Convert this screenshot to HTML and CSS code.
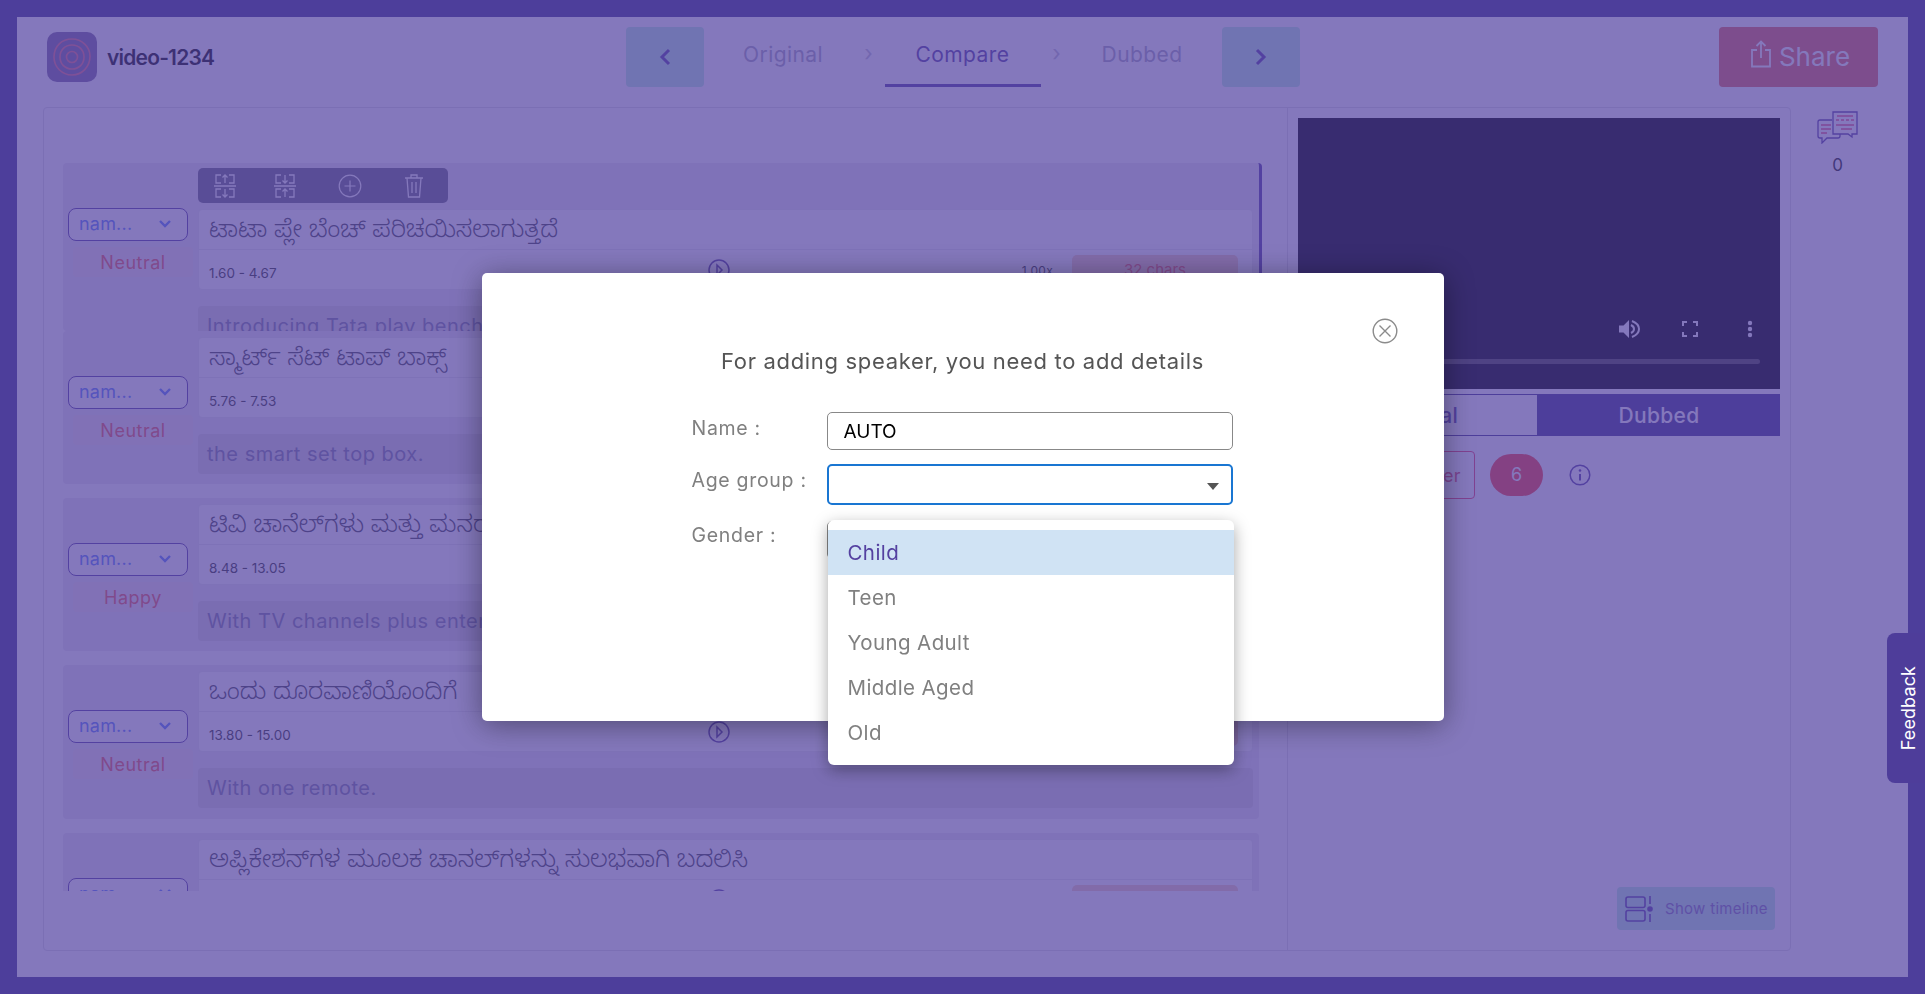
FILE: index.html
```html
<!DOCTYPE html>
<html lang="en">
<head>
  <meta charset="UTF-8" />
  <meta name="viewport" content="width=device-width, initial-scale=1.0" />
  <title>video-1234</title>
  <link rel="stylesheet" href="styles.css">
</head>
<body>

  <div class="page">
    <header class="topbar">
      <div class="brand">
        <div class="logo">
          <svg width="38" height="38" viewBox="0 0 38 38" fill="none" stroke="#ed7b82" stroke-width="1.6">
            <path d="M19 1c10 0 18 8 18 17 0 11-8 19-18 19S1 29 1 19C1 8 9 1 19 1z"/>
            <path d="M19 7c7 0 12 5 12 12s-5 12-12 12S7 26 7 19 12 7 19 7z"/>
            <circle cx="19" cy="19" r="5.500"/>
          </svg>
        </div>
        <span class="video-name">video-1234</span>
      </div>

      <nav class="steps">
        <button class="step-btn">
          <svg width="14" height="18" viewBox="0 0 14 18" fill="none" stroke="#5d49a3" stroke-width="3"><path d="M11 2 4 9l7 7"/></svg>
        </button>
        <a class="step">Original</a>
        <span class="step-sep">›</span>
        <a class="step active">Compare</a>
        <span class="step-sep">›</span>
        <a class="step">Dubbed</a>
        <button class="step-btn">
          <svg width="14" height="18" viewBox="0 0 14 18" fill="none" stroke="#5d49a3" stroke-width="3"><path d="m3 2 7 7-7 7"/></svg>
        </button>
      </nav>

      <div class="topbar-right">
        <button class="share-btn">
          <svg width="22" height="28" viewBox="0 0 22 28" fill="none" stroke="#fff" stroke-width="1.8">
            <path d="M7 10H2v16.500h18V10h-5"/>
            <path d="M11 18V2M6.500 6 11 1.500 15.500 6"/>
          </svg>
          Share
        </button>
      </div>
    </header>

    <main class="workspace">
      <div class="panel">
        <section class="list-pane">
          <div class="list">

            <div class="row row-selected">
              <div class="speaker">
                <div class="speaker-select">nam...<svg width="12" height="8" viewBox="0 0 12 8" fill="none" stroke="#6185ff" stroke-width="2.400"><path d="m1 1 5 5 5-5"/></svg></div>
                <div class="emotion">Neutral</div>
              </div>
              <div class="segment">
                <div class="toolbar">
                  <svg class="tool" width="24" height="26" viewBox="0 0 24 26" fill="none" stroke="#fff" stroke-width="1.300">
                    <path d="M8 2H3v8h5M16 2h5v8h-5M8 16H3v8h5M16 16h5v8h-5"/>
                    <path d="M12 10V2M9.500 4.500 12 2l2.500 2.500M12 16v8M9.500 21.500 12 24l2.500-2.500M1 13h22"/>
                  </svg>
                  <svg class="tool" width="24" height="26" viewBox="0 0 24 26" fill="none" stroke="#fff" stroke-width="1.300">
                    <path d="M8 2H3v8h5M16 2h5v8h-5M8 16H3v8h5M16 16h5v8h-5"/>
                    <path d="M12 2v8M9.500 7.500 12 10l2.500-2.500M12 24v-8M9.500 18.500 12 16l2.500 2.500M1 13h22"/>
                  </svg>
                  <svg class="tool" width="24" height="24" viewBox="0 0 24 24" fill="none" stroke="#fff" stroke-width="1.200">
                    <circle cx="12" cy="12" r="10.800"/>
                    <path d="M12 6.500v11M6.500 12h11"/>
                  </svg>
                  <svg class="tool" width="20" height="26" viewBox="0 0 20 26" fill="none" stroke="#fff" stroke-width="1.300">
                    <path d="M1 5h18M7 5V2h6v3M3 5l1.500 19h11L17 5M8 9v11M12 9v11"/>
                  </svg>
                </div>
                <div class="card">
                  <div class="card-text">ಟಾಟಾ ಪ್ಲೇ ಬೆಂಚ್ ಪರಿಚಯಿಸಲಾಗುತ್ತದೆ</div>
                  <div class="card-meta">
                    <span class="time">1.60 - 4.67</span>
                    <svg class="play" width="22" height="22" viewBox="0 0 22 22" fill="none" stroke="#5d49a3" stroke-width="1.500"><circle cx="11" cy="11" r="10"/><path d="m9 6 5 5-5 5z"/></svg>
                    <span class="speed">1.00x</span>
                    <span class="chars">32 chars</span>
                  </div>
                </div>
                <div class="translation">Introducing Tata play bench</div>
              </div>
            </div>

            <div class="row">
              <div class="speaker">
                <div class="speaker-select">nam...<svg width="12" height="8" viewBox="0 0 12 8" fill="none" stroke="#6185ff" stroke-width="2.400"><path d="m1 1 5 5 5-5"/></svg></div>
                <div class="emotion">Neutral</div>
              </div>
              <div class="segment">
                <div class="card">
                  <div class="card-text">ಸ್ಮಾರ್ಟ್ ಸೆಟ್ ಟಾಪ್ ಬಾಕ್ಸ್</div>
                  <div class="card-meta">
                    <span class="time">5.76 - 7.53</span>
                    <svg class="play" width="22" height="22" viewBox="0 0 22 22" fill="none" stroke="#5d49a3" stroke-width="1.500"><circle cx="11" cy="11" r="10"/><path d="m9 6 5 5-5 5z"/></svg>
                    <span class="speed">1.00x</span>
                    <span class="chars">21 chars</span>
                  </div>
                </div>
                <div class="translation">the smart set top box.</div>
              </div>
            </div>

            <div class="row">
              <div class="speaker">
                <div class="speaker-select">nam...<svg width="12" height="8" viewBox="0 0 12 8" fill="none" stroke="#6185ff" stroke-width="2.400"><path d="m1 1 5 5 5-5"/></svg></div>
                <div class="emotion">Happy</div>
              </div>
              <div class="segment">
                <div class="card">
                  <div class="card-text">ಟಿವಿ ಚಾನೆಲ್‌ಗಳು ಮತ್ತು ಮನರಂಜನೆ</div>
                  <div class="card-meta">
                    <span class="time">8.48 - 13.05</span>
                    <svg class="play" width="22" height="22" viewBox="0 0 22 22" fill="none" stroke="#5d49a3" stroke-width="1.500"><circle cx="11" cy="11" r="10"/><path d="m9 6 5 5-5 5z"/></svg>
                    <span class="speed">1.00x</span>
                    <span class="chars">27 chars</span>
                  </div>
                </div>
                <div class="translation">With TV channels plus entertainment</div>
              </div>
            </div>

            <div class="row">
              <div class="speaker">
                <div class="speaker-select">nam...<svg width="12" height="8" viewBox="0 0 12 8" fill="none" stroke="#6185ff" stroke-width="2.400"><path d="m1 1 5 5 5-5"/></svg></div>
                <div class="emotion">Neutral</div>
              </div>
              <div class="segment">
                <div class="card">
                  <div class="card-text">ಒಂದು ದೂರವಾಣಿಯೊಂದಿಗೆ</div>
                  <div class="card-meta">
                    <span class="time">13.80 - 15.00</span>
                    <svg class="play" width="22" height="22" viewBox="0 0 22 22" fill="none" stroke="#5d49a3" stroke-width="1.500"><circle cx="11" cy="11" r="10"/><path d="m9 6 5 5-5 5z"/></svg>
                    <span class="speed">1.00x</span>
                    <span class="chars">19 chars</span>
                  </div>
                </div>
                <div class="translation">With one remote.</div>
              </div>
            </div>

            <div class="row">
              <div class="speaker">
                <div class="speaker-select">nam...<svg width="12" height="8" viewBox="0 0 12 8" fill="none" stroke="#6185ff" stroke-width="2.400"><path d="m1 1 5 5 5-5"/></svg></div>
                <div class="emotion">Neutral</div>
              </div>
              <div class="segment">
                <div class="card">
                  <div class="card-text">ಅಪ್ಲಿಕೇಶನ್‌ಗಳ ಮೂಲಕ ಚಾನಲ್‌ಗಳನ್ನು ಸುಲಭವಾಗಿ ಬದಲಿಸಿ</div>
                  <div class="card-meta">
                    <span class="time">15.20 - 18.90</span>
                    <svg class="play" width="22" height="22" viewBox="0 0 22 22" fill="none" stroke="#5d49a3" stroke-width="1.500"><circle cx="11" cy="11" r="10"/><path d="m9 6 5 5-5 5z"/></svg>
                    <span class="speed">1.00x</span>
                    <span class="chars">44 chars</span>
                  </div>
                </div>
                <div class="translation">Switch channels easily through apps</div>
              </div>
            </div>

          </div>
        </section>

        <aside class="player-pane">
          <div class="video">
            <div class="video-icons">
              <svg width="22" height="22" viewBox="0 0 22 22" fill="#fff"><path d="M1 7.500h4.500L11 2v18l-5.500-5.500H1z"/><path d="M14 3c5 2 7 5 7 8s-2 6-7 8" fill="none" stroke="#fff" stroke-width="2"/><path d="M13 7c2 1 3 2.500 3 4s-1 3-3 4" fill="none" stroke="#fff" stroke-width="2"/></svg>
              <svg width="16" height="16" viewBox="0 0 16 16" fill="none" stroke="#fff" stroke-width="2"><path d="M1 5V1h4M11 1h4v4M15 11v4h-4M5 15H1v-4"/></svg>
              <svg width="6" height="18" viewBox="0 0 6 18" fill="#fff"><circle cx="3" cy="3" r="2.200"/><circle cx="3" cy="9" r="2.200"/><circle cx="3" cy="15" r="2.200"/></svg>
            </div>
            <div class="video-track"></div>
          </div>
          <div class="audio-tabs">
            <div class="audio-tab">Original</div>
            <div class="audio-tab on">Dubbed</div>
          </div>
          <div class="player-actions">
            <button class="filter-btn">Filter</button>
            <span class="count">6</span>
            <svg width="22" height="22" viewBox="0 0 22 22" fill="none" stroke="#5d49a3" stroke-width="1.500"><circle cx="11" cy="11" r="9.800"/><path d="M11 10v6.500" stroke-width="2"/><circle cx="11" cy="6.500" r="1.300" fill="#5d49a3" stroke="none"/></svg>
          </div>
          <button class="timeline-btn">
            <svg width="28" height="26" viewBox="0 0 28 26" fill="none" stroke="#5d49a3" stroke-width="1.600">
              <rect x="1" y="1" width="19" height="10.500" rx="2"/>
              <rect x="1" y="14.500" width="19" height="10.500" rx="2"/>
              <path d="M25 0v8M25 18v8"/>
              <circle cx="25" cy="13" r="2.800" fill="#5d49a3" stroke="none"/>
            </svg>
            Show timeline
          </button>
        </aside>
      </div>

      <div class="comments">
        <svg width="41" height="33" viewBox="0 0 41 33" fill="none" stroke="#5d49a3" stroke-width="1.300">
          <path d="M15 9H3a2 2 0 0 0-2 2v14a2 2 0 0 0 2 2h2v5l5-5h11a2 2 0 0 0 2-2v-3"/>
          <path d="M16 1h24v22h-5v3l-4-3H16z" fill="#fff"/>
          <path d="M20 5h16M19 9h3M24 9h3M29 9h3M34 9h3M19 14h18M24 18h11M4 14h10M4 18h10M4 22h6" stroke="#ed5a82"/>
        </svg>
        <span class="comments-count">0</span>
      </div>
    </main>
  </div>

  <div class="scrim">
    <div class="modal">
      <svg class="modal-close" width="26" height="26" viewBox="0 0 26 26" fill="none" stroke="#8b8b8b" stroke-width="1.400">
        <circle cx="13" cy="13" r="11.800"/>
        <path d="m7.500 7.500 11 11M18.500 7.500l-11 11"/>
      </svg>
      <h2 class="modal-title">For adding speaker, you need to add details</h2>

      <div class="form">
        <label class="form-label">Name :</label>
        <div class="field">AUTO</div>

        <label class="form-label">Age group :</label>
        <div class="field field-select focused">
          <span class="field-arrow"></span>
          <ul class="dropdown">
            <li class="selected">Child</li>
            <li>Teen</li>
            <li>Young Adult</li>
            <li>Middle Aged</li>
            <li>Old</li>
          </ul>
        </div>

        <label class="form-label">Gender :</label>
        <div class="field field-gender"></div>
      </div>
    </div>
  </div>

  <div class="feedback"><span>Feedback</span></div>

</body>
</html>
```

FILE: styles.css
```css
* {
  box-sizing: border-box;
}

body {
  margin: 0;
  height: 100vh;
  padding: 17px;
  overflow: hidden;
  background: #493c8f;
  font-family: Inter, "Noto Sans", "Noto Sans Kannada", sans-serif;
  color: #2f3239;
}

button {
  font-family: inherit;
  border: 0;
  cursor: pointer;
}

.page {
  display: flex;
  flex-direction: column;
  height: 100%;
  background: #fff;
}

/* top bar */
.topbar {
  display: grid;
  grid-template-columns: 1fr auto 1fr;
  height: 90px;
  padding: 10px 30px 0;
}

.brand {
  display: flex;
  align-items: center;
  gap: 10px;
  height: 50px;
  margin-top: 5px;
}

.logo {
  display: flex;
  align-items: center;
  justify-content: center;
  width: 50px;
  height: 50px;
  background: #7f71a0;
  border-radius: 10px;
}

.video-name {
  font-size: 21px;
  font-weight: 600;
  letter-spacing: -0.8px;
  color: #111;
}

.steps {
  display: flex;
  height: 60px;
}

.step-btn {
  display: flex;
  align-items: center;
  justify-content: center;
  width: 78px;
  background: #bbf0dc;
  border-radius: 4px;
}

.steps .step-btn:first-child {
  margin-right: 10px;
}

.steps .step-btn:last-child {
  margin-left: 10px;
}

.step {
  width: 139px;
  text-align: center;
  line-height: 56px;
  font-size: 21px;
  letter-spacing: 0.4px;
  color: #aaaabe;
}

.step.active {
  width: 156px;
  color: #5d49a3;
  border-bottom: 3px solid #5d49a3;
}

.step-sep {
  width: 32px;
  line-height: 52px;
  text-align: center;
  font-size: 22px;
  color: #c4c4d2;
}

.topbar-right {
  display: flex;
  justify-content: flex-end;
}

.share-btn {
  display: flex;
  align-items: center;
  justify-content: center;
  gap: 7px;
  width: 159px;
  height: 60px;
  padding: 0 0 2px 3px;
  background: #e66e61;
  border-radius: 4px;
  color: #fff;
  font-size: 26px;
  font-weight: 400;
}

.share-btn svg {
  margin-top: -5px;
}

/* main area */
.workspace {
  display: flex;
  flex: 1;
  min-height: 0;
  padding: 0 24px 26px 26px;
}

.panel {
  display: flex;
  flex: 1;
  border: 1px solid #dfdfe3;
  border-radius: 4px;
}

.list-pane {
  width: 1243px;
  padding: 55px 25px 0 19px;
}

.list {
  height: 728px;
  overflow: hidden;
}

.row {
  display: flex;
  height: 153.200px;
  margin: 0 3px 14px 0;
  background: #edeaf0;
  border-radius: 4px;
}

.row-selected {
  height: 168px;
  margin: 0;
  overflow: hidden;
  border-right: 3px solid #5d49a3;
}

.speaker {
  width: 135px;
  padding: 45px 0 0 5px;
}

.speaker-select {
  display: flex;
  align-items: center;
  justify-content: space-between;
  width: 120px;
  height: 33px;
  padding: 0 16px 2px 10px;
  background: #fff;
  border: 1px solid #5d49a3;
  border-radius: 8px;
  font-size: 18px;
  letter-spacing: 0.2px;
  color: #6185ff;
}

.emotion {
  width: 120px;
  height: 30px;
  margin: 6px 0 0 5px;
  background: #f5e8ea;
  border-radius: 4px;
  text-align: center;
  font-size: 18px;
  letter-spacing: 0.5px;
  line-height: 31px;
  color: #f0645c;
}

.segment {
  flex: 1;
  padding: 6px 6px 0 0;
}

.row-selected .segment {
  padding-top: 5px;
}

.toolbar {
  display: flex;
  align-items: center;
  width: 250px;
  height: 35px;
  margin-bottom: 6px;
  background: #717182;
  border-radius: 5px;
}

.tool:nth-child(1) {
  margin-left: 15px;
}

.tool:nth-child(2) {
  margin-left: 36px;
}

.tool:nth-child(3) {
  margin-left: 41px;
}

.tool:nth-child(4) {
  margin-left: 42px;
}

.card {
  height: 81px;
  background: #fff;
  border: 1px solid #e9e9ed;
  border-radius: 4px;
}

.card-text {
  height: 40px;
  padding-left: 10px;
  border-bottom: 1px solid #e9e9ed;
  font-size: 24px;
  font-weight: 300;
  line-height: 38px;
  color: #4a4d55;
  white-space: nowrap;
  overflow: hidden;
}

.card-meta {
  display: flex;
  align-items: flex-start;
  padding: 5px 14px 0 10px;
}

.time {
  width: 499px;
  padding-top: 10px;
  font-size: 13.500px;
  color: #3a3d3a;
}

.play {
  margin-top: 4px;
}

.speed {
  margin-left: auto;
  padding-top: 8px;
  font-size: 12px;
  letter-spacing: 0.3px;
  color: #3a3d3a;
}

.chars {
  width: 166px;
  height: 29px;
  margin-left: 19px;
  background: #f8d4c0;
  border-radius: 5px;
  text-align: center;
  font-size: 15px;
  line-height: 29px;
  color: #f0645c;
}

.translation {
  height: 40px;
  margin-top: 16px;
  padding-left: 9px;
  background: #dcd9dc;
  border-radius: 4px;
  font-size: 20px;
  letter-spacing: 0.5px;
  line-height: 41px;
  color: #8282a3;
  white-space: nowrap;
  overflow: hidden;
}

/* right side */
.player-pane {
  display: flex;
  flex: 1;
  flex-direction: column;
  padding: 10px 10px 20px;
  border-left: 1px solid #dfdfe3;
}

.video {
  position: relative;
  height: 271px;
  background: #000;
}

.video-icons {
  position: absolute;
  right: 27px;
  top: 200px;
  display: flex;
  align-items: center;
  gap: 42px;
}

.video-icons svg:last-child {
  margin-left: 7px;
}

.video-track {
  position: absolute;
  left: 20px;
  right: 20px;
  top: 241px;
  height: 5px;
  border-radius: 3px;
  background: #4d4d43;
}

.audio-tabs {
  display: flex;
  height: 42px;
  margin-top: 5px;
}

.audio-tab {
  width: 240px;
  border: 1px solid #493c8f;
  text-align: center;
  font-size: 21px;
  font-weight: 500;
  letter-spacing: 0.3px;
  line-height: 41px;
  color: #5d49a3;
}

.audio-tab.on {
  width: 242px;
  background: #493c8f;
  color: #fff;
}

.player-actions {
  display: flex;
  align-items: center;
  height: 48px;
  margin-top: 15px;
}

.filter-btn {
  width: 110px;
  height: 48px;
  margin-left: 67px;
  padding-right: 13px;
  background: #fff;
  border: 1px solid #f04b6e;
  border-radius: 4px;
  text-align: right;
  font-size: 18px;
  letter-spacing: 0.4px;
  color: #e0556e;
}

.count {
  width: 53px;
  height: 42px;
  margin: 0 26px 0 15px;
  background: #ff4640;
  border-radius: 21px;
  text-align: center;
  font-size: 18px;
  line-height: 42px;
  color: #fff;
}

.timeline-btn {
  display: flex;
  align-items: center;
  gap: 12px;
  align-self: flex-end;
  width: 158px;
  height: 43px;
  margin: auto 5px 0 0;
  padding: 0 0 0 8px;
  background: #bbf0dc;
  border-radius: 4px;
  white-space: nowrap;
  font-size: 15px;
  letter-spacing: 0.3px;
  color: #827bb4;
}

.comments {
  display: flex;
  flex-direction: column;
  align-items: center;
  width: 94px;
  padding-top: 4px;
}

.comments-count {
  margin-top: 11px;
  font-size: 17px;
  color: #252825;
}

/* modal */
.scrim {
  position: fixed;
  inset: 0;
  display: flex;
  align-items: center;
  justify-content: center;
  background: rgba(80, 62, 159, 0.7);
  backdrop-filter: blur(0.6px);
}

.modal {
  position: relative;
  width: 962px;
  height: 448px;
  padding-top: 73px;
  background: #fff;
  border-radius: 5px;
  box-shadow: 0 4px 30px rgba(0, 0, 0, 0.4);
}

.modal-close {
  position: absolute;
  top: 45px;
  right: 46px;
}

.modal-title {
  margin: 0;
  text-align: center;
  font-size: 22px;
  font-weight: 400;
  letter-spacing: 0.67px;
  line-height: 30px;
  color: #555;
}

.form {
  display: grid;
  grid-template-columns: 135px 406px;
  row-gap: 14px;
  margin: 36px 0 0 210px;
}

.form-label {
  padding-top: 4px;
  font-size: 19.500px;
  letter-spacing: 0.7px;
  color: #808080;
}

.field {
  position: relative;
  height: 38px;
  padding-left: 16px;
  border: 1px solid #888;
  border-radius: 5px;
  font-size: 19px;
  line-height: 37px;
  color: #000;
}

.field.focused {
  height: 41px;
  border: 2px solid #1976d2;
}

.field-gender {
  margin-top: 2px;
}

.field-arrow {
  position: absolute;
  right: 12px;
  top: 17px;
  border: 6px solid transparent;
  border-top: 7px solid #555;
  border-bottom: 0;
}

.dropdown {
  position: absolute;
  top: 54px;
  left: -1px;
  right: -3px;
  margin: 0;
  padding: 10px 0;
  list-style: none;
  background: #fff;
  border-radius: 6px;
  box-shadow: 0 5px 16px rgba(0, 0, 0, 0.35);
  z-index: 2;
}

.dropdown li {
  height: 45px;
  padding-left: 20px;
  font-size: 20.500px;
  letter-spacing: 0.4px;
  line-height: 46px;
  color: #808080;
}

.dropdown li.selected {
  background: #d0e3f4;
  color: #5441a0;
}

/* stays above the scrim */
.feedback {
  position: fixed;
  right: 0;
  top: 633px;
  display: flex;
  align-items: center;
  justify-content: center;
  width: 38px;
  height: 150px;
  padding-left: 4px;
  background: #4e3d9a;
  border-radius: 8px 0 0 8px;
  color: #fff;
  font-size: 18px;
  font-weight: 400;
  letter-spacing: 0.1px;
}

.feedback span {
  writing-mode: vertical-rl;
  transform: rotate(180deg);
}
```
